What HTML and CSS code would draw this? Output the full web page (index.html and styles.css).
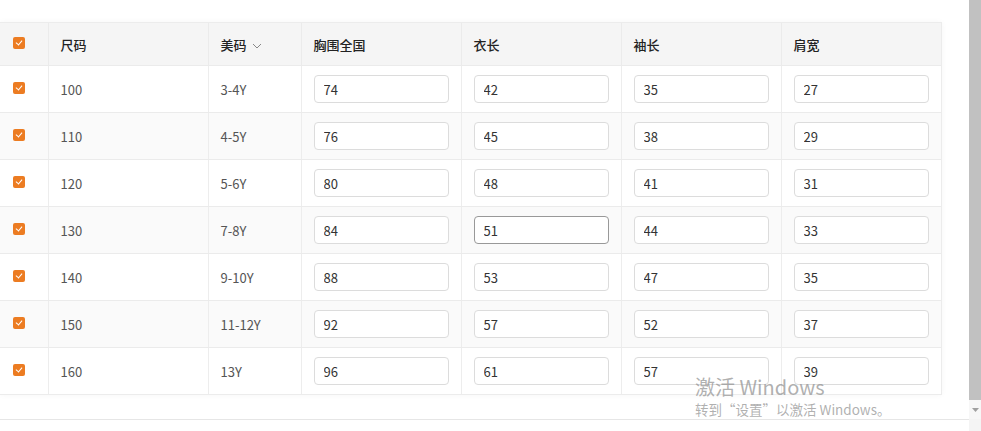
FILE: index.html
```html
<!DOCTYPE html>
<html lang="zh">
<head>
<meta charset="utf-8">
<link rel="stylesheet" href="styles.css">
</head>
<body>
<div class="page">
  <div class="main">
    <div class="card">
      <table class="grid">
        <colgroup>
          <col class="c-check"><col class="c-size"><col class="c-us"><col class="c-in"><col class="c-in"><col class="c-in"><col class="c-last">
        </colgroup>
        <thead>
          <tr>
            <th class="check-cell"><span class="cb"></span></th>
            <th>尺码</th>
            <th>美码 <svg class="chev" width="10" height="6" viewBox="0 0 10 6"><path d="M1 1 L5 5 L9 1" fill="none" stroke="#888" stroke-width="1"/></svg></th>
            <th>胸围全国</th>
            <th>衣长</th>
            <th>袖长</th>
            <th>肩宽</th>
          </tr>
        </thead>
        <tbody>
          <tr><td class="check-cell"><span class="cb"></span></td><td>100</td><td>3-4Y</td><td><input class="inp" value="74"></td><td><input class="inp" value="42"></td><td><input class="inp" value="35"></td><td><input class="inp" value="27"></td></tr>
          <tr class="alt"><td class="check-cell"><span class="cb"></span></td><td>110</td><td>4-5Y</td><td><input class="inp" value="76"></td><td><input class="inp" value="45"></td><td><input class="inp" value="38"></td><td><input class="inp" value="29"></td></tr>
          <tr><td class="check-cell"><span class="cb"></span></td><td>120</td><td>5-6Y</td><td><input class="inp" value="80"></td><td><input class="inp" value="48"></td><td><input class="inp" value="41"></td><td><input class="inp" value="31"></td></tr>
          <tr class="alt"><td class="check-cell"><span class="cb"></span></td><td>130</td><td>7-8Y</td><td><input class="inp" value="84"></td><td><input class="inp focus" value="51"></td><td><input class="inp" value="44"></td><td><input class="inp" value="33"></td></tr>
          <tr><td class="check-cell"><span class="cb"></span></td><td>140</td><td>9-10Y</td><td><input class="inp" value="88"></td><td><input class="inp" value="53"></td><td><input class="inp" value="47"></td><td><input class="inp" value="35"></td></tr>
          <tr class="alt"><td class="check-cell"><span class="cb"></span></td><td>150</td><td>11-12Y</td><td><input class="inp" value="92"></td><td><input class="inp" value="57"></td><td><input class="inp" value="52"></td><td><input class="inp" value="37"></td></tr>
          <tr><td class="check-cell"><span class="cb"></span></td><td>160</td><td>13Y</td><td><input class="inp" value="96"></td><td><input class="inp" value="61"></td><td><input class="inp" value="57"></td><td><input class="inp" value="39"></td></tr>
        </tbody>
      </table>
    </div>
    <div class="footer-line"></div>
  </div>
  <div class="scrollbar">
    <div class="thumb"></div>
    <div class="track">
      <svg width="7" height="4" viewBox="0 0 7 4"><path d="M0 0 L7 0 L3.5 4 Z" fill="#a0a0a0"/></svg>
    </div>
  </div>
</div>
<div class="activate">
  <div class="act-title">激活 Windows</div>
  <div class="act-sub">转到“设置”以激活 Windows。</div>
</div>
</body>
</html>
```
FILE: styles.css
```css
html, body {
  margin: 0;
  padding: 0;
  background: #fff;
  font-family: "Noto Sans CJK SC", "Noto Sans", sans-serif;
  font-size: 13px;
  color: #555;
}
.page {
  display: flex;
  width: 981px;
  height: 431px;
  overflow: hidden;
}
.main {
  flex: 1;
  display: flex;
  flex-direction: column;
  padding-top: 22px;
}
.card {
  width: 942px;
  border: 1px solid #ececec;
  border-left: none;
  box-sizing: border-box;
  box-shadow: 0 0 6px rgba(0,0,0,0.04);
}
.grid {
  border-collapse: collapse;
  table-layout: fixed;
  width: 941px;
}
.c-check { width: 48px; }
.c-size { width: 160px; }
.c-us { width: 93px; }
.c-in { width: 160px; }
.c-last { width: 160px; }
.grid th {
  height: 42px;
  background: #f5f5f5;
  text-align: left;
  font-weight: 500;
  color: #222;
  padding: 0 0 0 12px;
  border-left: 1px solid #ebebeb;
  border-bottom: 1px solid #ebebeb;
}
.grid td {
  height: 46px;
  padding: 0 0 0 12px;
  border-left: 1px solid #ededed;
  border-bottom: 1px solid #ebebeb;
  color: #555;
}
.grid tbody tr:last-child td { border-bottom: none; }
.grid th:first-child, .grid td:first-child { border-left: none; padding-left: 13px; }
.grid tr.alt td { background: #fafafa; }
.check-cell { vertical-align: middle; }
.cb {
  display: block;
  width: 12px;
  height: 12px;
  border-radius: 2px;
  background: #ec7c22;
  position: relative;
  margin-top: -2px;
}
.cb::after {
  content: "";
  position: absolute;
  left: 4px;
  top: 2px;
  width: 3px;
  height: 5px;
  border-right: 1px solid #fff;
  border-bottom: 1px solid #fff;
  transform: rotate(40deg);
}
.chev { margin-left: 3px; vertical-align: middle; }
.inp {
  display: block;
  width: 135px;
  height: 28px;
  box-sizing: border-box;
  border: 1px solid #dcdcdc;
  border-radius: 4px;
  padding: 0 9px;
  font-family: "Noto Sans CJK SC", "Noto Sans", sans-serif;
  font-size: 13px;
  color: #333;
  background: #fff;
  outline: none;
}
.inp.focus { border-color: #999; }
.footer-line {
  margin-top: 24px;
  height: 1px;
  background: #e6e6e6;
}
.scrollbar {
  width: 12px;
  display: flex;
  flex-direction: column;
  background: #f4f4f4;
}
.thumb {
  height: 400px;
  background: #c1c1c1;
}
.track {
  height: 19px;
  display: flex;
  justify-content: center;
  align-items: center;
  background: #f7f7f7;
}
.activate {
  position: absolute;
  left: 695px;
  top: 374px;
  color: rgba(150,150,150,0.75);
  font-family: "Noto Sans CJK SC", sans-serif;
}
.act-title { font-size: 20px; line-height: 26px; }
.act-sub { font-size: 13.5px; line-height: 18px; }
```
